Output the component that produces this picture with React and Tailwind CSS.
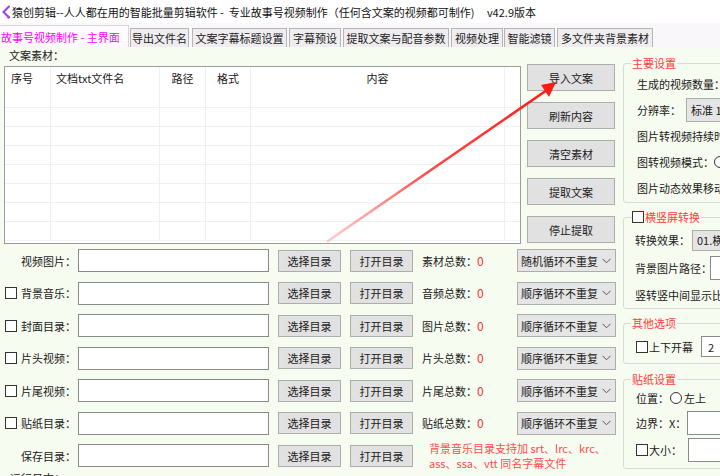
import React from "react";

function Cb() {
  return <span className="inline-block w-[12px] h-[12px] border border-[#333] bg-white shrink-0" />;
}

function Chevron() {
  return (
    <svg width="9" height="6" viewBox="0 0 9 6" className="shrink-0">
      <path d="M0.5 0.8 L4.5 4.8 L8.5 0.8" fill="none" stroke="#555" strokeWidth="1" />
    </svg>
  );
}

const tabs = [
  { t: "导出文件名", w: "w-[59px]", ml: "ml-[1px]" },
  { t: "文案字幕标题设置", w: "w-[95px]", ml: "ml-[3px]" },
  { t: "字幕预设", w: "w-[52px]", ml: "ml-[2px]" },
  { t: "提取文案与配音参数", w: "w-[106px]", ml: "ml-[2px]" },
  { t: "视频处理", w: "w-[52px]", ml: "ml-[2px]" },
  { t: "智能滤镜", w: "w-[51px]", ml: "ml-[1px]" },
  { t: "多文件夹背景素材", w: "w-[96px]", ml: "ml-[2px]" },
];

const rows = [
  { cb: false, label: "视频图片：", count: "素材总数：", sel: "随机循环不重复" },
  { cb: true, label: "背景音乐：", count: "音频总数：", sel: "顺序循环不重复" },
  { cb: true, label: "封面目录：", count: "图片总数：", sel: "顺序循环不重复" },
  { cb: true, label: "片头视频：", count: "片头总数：", sel: "顺序循环不重复" },
  { cb: true, label: "片尾视频：", count: "片尾总数：", sel: "顺序循环不重复" },
  { cb: true, label: "贴纸目录：", count: "贴纸总数：", sel: "顺序循环不重复" },
  { cb: false, label: "保存目录：", note: true },
];

const btn =
  "flex items-center justify-center bg-[#e1e1e1] border border-[#adadad] text-[#1a1a1a] shrink-0";

export default function App() {
  return (
    <div className="relative w-[720px] h-[476px] overflow-hidden bg-[#f7fcf0] font-['Noto_Sans_CJK_SC',sans-serif] text-[11px] leading-[14px] text-[#1a1a1a]">
      {/* title bar */}
      <div className="h-[23px] bg-white flex items-center whitespace-nowrap">
        <svg width="10" height="14" viewBox="0 0 10 14" className="ml-[1px] shrink-0">
          <path d="M8.5 1 L2.5 7 L8.5 13" fill="none" stroke="#9b3cf5" strokeWidth="2" />
          <circle cx="7.5" cy="12" r="1.6" fill="#c040ff" />
        </svg>
        <span className="ml-[1px] text-[11px] text-[#111]">
          猿创剪辑--人人都在用的智能批量剪辑软件 -&nbsp; 专业故事号视频制作（任何含文案的视频都可制作)&nbsp;&nbsp;&nbsp;&nbsp; v42.9版本
        </span>
      </div>

      {/* tab strip */}
      <div className="h-[24px] bg-[#faf7fa] flex items-end whitespace-nowrap">
        <div className="w-[129px] h-[22px] bg-[#fdfbfd] border-t border-r border-[#d6d6d6] flex items-center pl-[1px] text-[#ff00ff]">
          故事号视频制作 - 主界面
        </div>
        {tabs.map((t) => (
          <div
            key={t.t}
            className={`${t.w} ${t.ml} h-[19px] bg-[#efedf0] border border-b-0 border-[#b5b5b5] flex items-center justify-center`}
          >
            {t.t}
          </div>
        ))}
      </div>

      {/* main */}
      <div className="flex">
        {/* left column */}
        <div className="w-[620px] shrink-0">
          <div className="h-[16px] flex items-center pl-[9px]">文案素材：</div>
          <div className="flex items-start">
            <div className="ml-[4px] mt-[3px] w-[517px] h-[178px] border border-[#9c9c9c] bg-white overflow-hidden">
              <div className="grid grid-cols-[46px_109px_46px_45px_254px_15px]">
                <div className="h-[22px] border-r border-[#f0f0f0] flex items-center pl-[6px]">序号</div>
                <div className="h-[22px] border-r border-[#f0f0f0] flex items-center pl-[5px]">文档txt文件名</div>
                <div className="h-[22px] border-r border-[#f0f0f0] flex items-center justify-center">路径</div>
                <div className="h-[22px] border-r border-[#f0f0f0] flex items-center justify-center">格式</div>
                <div className="h-[22px] border-r border-[#f0f0f0] flex items-center justify-center">内容</div>
                <div className="h-[22px]" />
                {Array.from({ length: 48 }).map((_, i) => (
                  <div
                    key={i}
                    className={`h-[19px] border-b border-[#f0f0f0] ${i % 6 === 5 ? "" : "border-r"}`}
                  />
                ))}
              </div>
            </div>
            <div className="ml-[6px] mt-[1px] flex flex-col gap-[11px]">
              {["导入文案", "刷新内容", "清空素材", "提取文案", "停止提取"].map((b) => (
                <div key={b} className={`${btn} w-[88px] h-[27px]`}>
                  {b}
                </div>
              ))}
            </div>
          </div>

          {/* directory rows */}
          <div className="mt-[5px] flex flex-col gap-[9.5px]">
            {rows.map((r) => (
              <div key={r.label} className="h-[23px] flex items-center whitespace-nowrap">
                <div className="w-[21px] pl-[5px] flex items-center shrink-0">{r.cb ? <Cb /> : null}</div>
                <div className="w-[57px] shrink-0">{r.label}</div>
                <div className="w-[191px] h-[23px] bg-white border border-[#8a8a8a] shrink-0" />
                <div className={`${btn} ml-[9px] w-[63px] h-[22px]`}>选择目录</div>
                <div className={`${btn} ml-[9px] w-[63px] h-[22px]`}>打开目录</div>
                {r.note ? (
                  <div className="ml-[16px] leading-[15px] text-[#ff4d4d]">
                    背景音乐目录支持加 srt、lrc、krc、
                    <br />
                    ass、ssa、vtt 同名字幕文件
                  </div>
                ) : (
                  <>
                    <div className="ml-[9px] w-[55px] shrink-0">{r.count}</div>
                    <div className="w-[40px] text-[#ff3030] text-[12px]">0</div>
                    <div className="w-[99px] h-[23px] bg-[#e5e5e5] border border-[#adadad] flex items-center justify-between pl-[3px] pr-[4px] shrink-0">
                      <span>{r.sel}</span>
                      <Chevron />
                    </div>
                  </>
                )}
              </div>
            ))}
          </div>
          <div className="mt-[4px] pl-[10px]">运行日志：</div>
        </div>

        {/* right column */}
        <div className="w-[200px] shrink-0 pl-[3px] whitespace-nowrap">
          <fieldset className="mt-[9px] w-[140px] border border-[#d9d9d9] rounded-[3px]">
            <legend className="ml-[7px] px-[1px] text-[#ff3b3b] leading-[14px]">主要设置</legend>
            <div className="pl-[13px] pt-[1px] pb-[1px]">
              <div className="h-[26px] flex items-center">生成的视频数量：</div>
              <div className="h-[26px] flex items-center">
                <span className="w-[49px]">分辨率：</span>
                <div className="h-[24px] w-[80px] bg-[#e5e5e5] border border-[#adadad] flex items-center pl-[4px]">标准 1080P</div>
              </div>
              <div className="h-[26px] flex items-center">图片转视频持续时间：</div>
              <div className="h-[26px] flex items-center">
                图转视频模式：
                <span className="ml-[0px] inline-block w-[12px] h-[12px] rounded-full border border-[#333] bg-white" />
              </div>
              <div className="h-[26px] flex items-center">图片动态效果移动速度</div>
            </div>
          </fieldset>

          <fieldset className="mt-[7px] w-[140px] border border-[#d9d9d9] rounded-[3px]">
            <legend className="ml-[8px] pr-[1px] flex items-center text-[#ff3b3b] leading-[14px]">
              <Cb />
              <span className="ml-[1px]">横竖屏转换</span>
            </legend>
            <div className="pl-[11px] pt-[2px]">
              <div className="h-[28px] flex items-center">
                转换效果：
                <div className="ml-[2px] h-[21px] w-[80px] bg-[#e5e5e5] border border-[#adadad] flex items-center pl-[4px]">01.横屏转竖屏</div>
              </div>
              <div className="h-[28px] flex items-center">
                背景图片路径：
                <div className="ml-[-2px] h-[24px] w-[60px] bg-white border border-[#8a8a8a]" />
              </div>
              <div className="h-[26px] flex items-center">竖转竖中间显示比例：</div>
            </div>
          </fieldset>

          <fieldset className="mt-[7px] w-[140px] border border-[#d9d9d9] rounded-[3px]">
            <legend className="ml-[7px] px-[1px] text-[#ff3b3b] leading-[14px]">其他选项</legend>
            <div className="pl-[12px]">
              <div className="h-[33px] flex items-center">
                <Cb />
                <span className="ml-[1px]">上下开幕</span>
                <div className="ml-[8px] h-[21px] w-[40px] bg-white border border-[#8a8a8a] flex items-center pl-[6px]">2</div>
              </div>
            </div>
          </fieldset>

          <fieldset className="mt-[8px] w-[140px] border border-[#d9d9d9] rounded-[3px]">
            <legend className="ml-[7px] px-[1px] text-[#ff3b3b] leading-[14px]">贴纸设置</legend>
            <div className="pl-[12px] pb-[5px]">
              <div className="h-[24px] flex items-center">
                位置：
                <span className="ml-[1px] inline-block w-[12px] h-[12px] rounded-full border border-[#333] bg-white" />
                <span className="ml-[2px]">左上</span>
              </div>
              <div className="h-[26px] flex items-center">
                边界：X：
                <div className="ml-[1px] h-[24px] w-[50px] bg-white border border-[#8a8a8a]" />
              </div>
              <div className="h-[27px] flex items-center">
                <Cb />
                <span className="ml-[1px]">大小：</span>
                <div className="ml-[6px] h-[24px] w-[50px] bg-white border border-[#8a8a8a]" />
              </div>
            </div>
          </fieldset>
        </div>
      </div>

      {/* red arrow annotation */}
      <svg className="absolute left-0 top-0 pointer-events-none" width="720" height="476" viewBox="0 0 720 476">
        <defs>
          <linearGradient id="ag" gradientUnits="userSpaceOnUse" x1="328" y1="241" x2="548" y2="89">
            <stop offset="0" stopColor="#ff6b6b" stopOpacity="0.35" />
            <stop offset="0.45" stopColor="#ff2a2a" stopOpacity="0.85" />
            <stop offset="1" stopColor="#ff1a1a" />
          </linearGradient>
        </defs>
        <path d="M328 241 L547 90" stroke="url(#ag)" strokeWidth="2.6" strokeLinecap="round" fill="none" />
        <polygon points="556,82 541,85 549,97" fill="#ff1a1a" />
      </svg>
    </div>
  );
}
